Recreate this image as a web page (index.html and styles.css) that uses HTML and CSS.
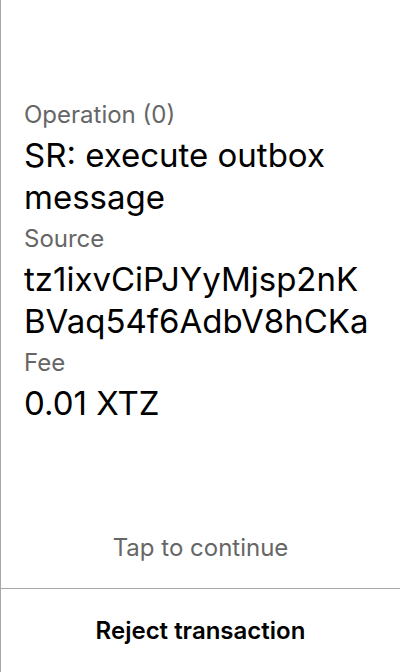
FILE: index.html
```html
<!DOCTYPE html>
<html>
<head>
<meta charset="utf-8">
<link rel="stylesheet" href="styles.css">
</head>
<body>
<div class="screen">
  <div class="content">
    <div class="label">Operation (0)</div>
    <div class="value">SR: execute outbox message</div>
    <div class="label">Source</div>
    <div class="value hash">tz1ixvCiPJYyMjsp2nKBVaq54f6AdbV8hCKa</div>
    <div class="label">Fee</div>
    <div class="value">0.01 XTZ</div>
  </div>
  <div class="tap">Tap to continue</div>
  <div class="reject">Reject transaction</div>
</div>
</body>
</html>
```
FILE: styles.css
```css
html, body {
  margin: 0;
  padding: 0;
  background: #fff;
}
.screen {
  width: 400px;
  height: 672px;
  box-sizing: border-box;
  border-left: 1px solid #a8a8a8;
  display: flex;
  flex-direction: column;
  font-family: Inter, "Noto Sans", sans-serif;
}
.content {
  flex: 1;
  padding: 94px 23px 0 23px;
}
.label {
  font-size: 24px;
  line-height: 41px;
  color: #666;
}
.value {
  font-size: 33px;
  line-height: 41.5px;
  color: #000;
}
.hash {
  word-break: break-all;
}
.tap {
  text-align: center;
  font-size: 24px;
  color: #666;
  line-height: 40px;
  padding-bottom: 20px;
  border-bottom: 1px solid #a8a8a8;
}
.reject {
  height: 83px;
  display: flex;
  align-items: center;
  justify-content: center;
  font-size: 24px;
  font-weight: 600;
  color: #000;
}
```
